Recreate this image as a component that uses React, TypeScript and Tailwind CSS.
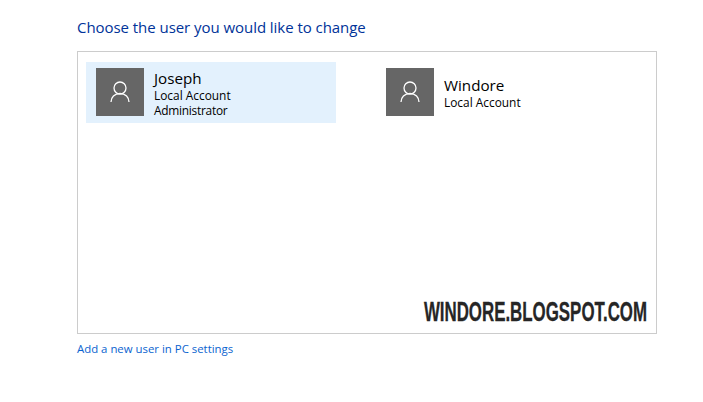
function UserIcon() {
  return (
    <svg width="20" height="22" viewBox="0 0 20 22" fill="none" stroke="#ffffff" strokeWidth="1.3">
      <circle cx="10" cy="7" r="6" />
      <path d="M1 21 C1 16.5 4.5 12.5 10 12.5 C15.5 12.5 19 16.5 19 21" />
    </svg>
  );
}

function User({ name, lines, active }: { name: string; lines: string[]; active?: boolean }) {
  return (
    <div className={`relative w-[250px] h-[61px] flex items-center pl-[10px] gap-[10px] ${active ? "bg-[#e3f1fd]" : ""}`}>
      <div className="w-[48px] h-[48px] mb-[1px] bg-[#666666] flex items-center justify-center">
        <UserIcon />
      </div>
      <div className="text-black flex flex-col">
        <div className="text-[15.2px] leading-[20px]">{name}</div>
        {lines.map((l) => (
          <div key={l} className={`text-[11.9px] leading-[15px] ${l === "Administrator" ? "tracking-[-0.25px]" : ""}`}>{l}</div>
        ))}
      </div>
    </div>
  );
}

export default function App() {
  return (
    <div className="w-[703px] h-[402px] bg-white overflow-hidden pl-[77px] pt-[17px]" style={{ fontFamily: '"Open Sans", "Noto Sans", sans-serif' }}>
      <h1 className="text-[15px] leading-[20px] text-[#003399] font-normal tracking-[-0.05px]">Choose the user you would like to change</h1>
      <div className="relative mt-[14px] w-[580px] h-[283px] border border-[#cccccc] pt-[10px] pl-[8px]">
        <div className="flex gap-[40px]">
          <User name="Joseph" lines={["Local Account", "Administrator"]} active />
          <User name="Windore" lines={["Local Account"]} />
        </div>
        <div
          className="absolute right-[9px] bottom-[6px] text-[27px] leading-[30px] font-bold text-[#262626] whitespace-nowrap origin-right scale-x-[0.625]"
          style={{ fontFamily: '"Liberation Sans", sans-serif', WebkitTextStroke: "0.3px #262626" }}
        >
          WINDORE.BLOGSPOT.COM
        </div>
      </div>
      <div className="mt-[7px] text-[11.4px] leading-[16px] text-[#0a63cf]">Add a new user in PC settings</div>
    </div>
  );
}
